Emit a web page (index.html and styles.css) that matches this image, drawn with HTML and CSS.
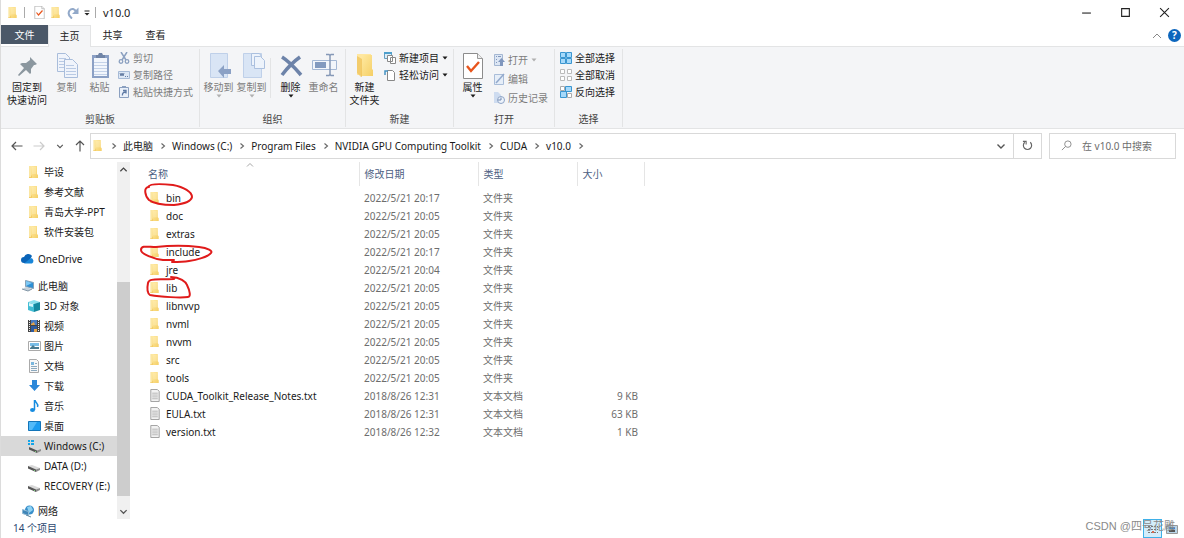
FILE: index.html
```html
<!DOCTYPE html>
<html lang="zh-CN">
<head>
<meta charset="utf-8">
<title>v10.0</title>
<link rel="stylesheet" href="styles.css">
</head>
<body>
<svg class="defs" aria-hidden="true">
  <defs>
    <linearGradient id="gold" x1="0" x2="1" y1="0" y2="1"><stop offset="0" stop-color="#ffeaa3"/><stop offset="1" stop-color="#f5cf66"/></linearGradient>
    <symbol id="folder" viewBox="0 0 12 14"><path fill="#fbe6a2" d="M1 1h4l1 1v11H1z"/><path fill="url(#gold)" d="M3 1h6v8l1 1v3H3z"/><path fill="#f3cb66" d="M1 12h2v-2l1 1v2H1z"/><path fill="#fff0bd" d="M4 2h4v7H4z" opacity=".4"/></symbol>
    <symbol id="txt" viewBox="0 0 12 14"><path fill="#f2f2f2" stroke="#9a9a9a" d="M1.500 .5h7l2 2v11h-9z"/><path stroke="#b4b4b4" d="M3 4.500h6M3 6.500h6M3 8.500h6M3 10.500h6"/></symbol>
    <symbol id="right" viewBox="0 0 8 8"><path d="M2.500 1.500 5.500 4l-3 2.500" fill="none" stroke="#666" stroke-width="1.100"/></symbol>
    <symbol id="down" viewBox="0 0 10 10"><path d="m1.500 3.500 3.500 3.500 3.500-3.500" fill="none" stroke="#555" stroke-width="1.400"/></symbol>
    <symbol id="up" viewBox="0 0 10 10"><path d="M1.500 7 5 3.500 8.500 7" fill="none" stroke="#444" stroke-width="1.400"/></symbol>
    <symbol id="upthin" viewBox="0 0 10 8"><path d="M1 6 5 2l4 4" fill="none" stroke="#888"/></symbol>
    <symbol id="caret" viewBox="0 0 6 4"><path d="M0.500 0.500h5L3 3.500z" fill="currentColor"/></symbol>
    <symbol id="drive" viewBox="0 0 14 14"><path fill="#d9d9d9" d="m1 7 4-1 8 3-4 2z"/><path fill="#555" d="m1 7 8 3.500v2.500L1 9.500z"/><path fill="#8e8e8e" d="m9 10.500 4-1.500v2l-4 2z"/><path stroke="#7ed37e" d="M7.500 11v1"/></symbol>
    <symbol id="check" viewBox="0 0 20 26"><path fill="#fff" stroke="#8c8c8c" d="M.5.5h14l5 5v20H.5z"/><path fill="#eee" stroke="#999" d="M14.500.5v5h5"/><path d="m4 13 4 5 8-9" fill="none" stroke="#e8541c" stroke-width="2.400"/></symbol>
  </defs>
</svg>

<div class="window">
  <header class="titlebar">
    <div class="quick">
      <svg class="i-folder"><use href="#folder"/></svg>
      <span class="sep"></span>
      <button aria-label="属性"><svg class="i-check"><use href="#check"/></svg></button>
      <button aria-label="新建文件夹"><svg class="i-folder"><use href="#folder"/></svg></button>
      <button aria-label="恢复"><svg class="i-redo" viewBox="0 0 12 12"><path d="M5 11.500C1.500 9 1 6 2.500 3.500 4.500 1 8 1.500 9 5" fill="none" stroke="#92a9c9" stroke-width="2"/><path d="M11.500 .5V7H5z" fill="#92a9c9"/></svg></button>
      <button aria-label="自定义快速访问工具栏"><svg class="i-custom" viewBox="0 0 6 6"><path d="M.5 1h5" stroke="#222"/><path d="M.5 3h5L3 5.500z" fill="#222"/></svg></button>
      <span class="sep"></span>
      <span class="title">v10.0</span>
    </div>
    <div class="controls">
      <button aria-label="最小化"><svg viewBox="0 0 10 10"><path d="M1 5.500h8" stroke="#222"/></svg></button>
      <button aria-label="最大化"><svg viewBox="0 0 10 10"><path d="M1.500 1.500h7v7h-7z" fill="none" stroke="#222"/></svg></button>
      <button aria-label="关闭"><svg viewBox="0 0 10 10"><path d="m1 1 8 8M9 1 1 9" stroke="#222"/></svg></button>
    </div>
  </header>

  <nav class="tabs">
    <button class="tab file">文件</button>
    <button class="tab active">主页</button>
    <button class="tab">共享</button>
    <button class="tab">查看</button>
    <div class="tabtools">
      <button aria-label="最小化功能区"><svg class="i-up" viewBox="0 0 10 8"><use href="#upthin"/></svg></button>
      <button class="help" aria-label="帮助">?</button>
    </div>
  </nav>

  <section class="ribbon">
    <div class="group clipboard">
      <div class="tools">
        <button class="big wide"><svg viewBox="0 0 26 26"><path d="m16 4 7 7-2 1-1 0-3 4 0 4-1 1-4-4-7 6-1-1 6-7-4-4 2-1h4l4-3z" fill="#8b979f"/></svg><span>固定到<br>快速访问</span></button>
        <button class="big off"><svg viewBox="0 0 26 26"><g fill="#f0f4fb" stroke="#a9bddb"><path d="M3.500.5h8l4 4v14h-12z"/><path d="M10.500 6.500h8l5 5v13h-13z"/></g><path stroke="#b9cae4" d="M5 5.500h7M5 8.500h5M5 11.500h5M5 14.500h5M12 12.500h8M12 15.500h10M12 18.500h10M12 21.500h10"/></svg><span>复制</span></button>
        <button class="big off"><svg viewBox="0 0 26 26"><path fill="#8ba0c5" d="M5 2h17v23H5z"/><path fill="#f2f6fc" d="M7 5h13v18H7z"/><path stroke="#c4d2e8" d="M7 9.500h13M7 12.500h13M7 15.500h13M7 18.500h13M7 21.500h13"/><path fill="#7185a7" d="M9 2h2l1-2h3l1 2h2v3H9z"/></svg><span>粘贴</span></button>
        <div class="small off">
          <button><svg viewBox="0 0 12 12"><path d="m3 0 5 8M9 0 4 8" stroke="#8ba0c0" stroke-width="1.500"/><g fill="none" stroke="#8ba0c0" stroke-width="1.300"><circle cx="3" cy="9.500" r="1.800"/><circle cx="9" cy="9.500" r="1.800"/></g></svg>剪切</button>
          <button><svg viewBox="0 0 12 12"><path fill="#dce7f5" stroke="#a6bad6" d="M.5 2.500h11v7H.5z"/><path d="m2 4 1 3 1-3 1 3 1-3M7 7.500h1M9 7.500h1" fill="none" stroke="#677fa5"/></svg>复制路径</button>
          <button><svg viewBox="0 0 12 12"><path fill="#eaf0f9" stroke="#8ba0c0" d="M1.500 1.500h9v10h-9z"/><path fill="#8ba0c0" d="M4 0h4v2H4z"/><path d="M4.500 9.500c-.5-2 1-3.500 3-3.500M5 4.500h3v3" fill="none" stroke="#5e79a4" stroke-width="1.300"/></svg>粘贴快捷方式</button>
        </div>
      </div>
      <div class="label">剪贴板</div>
    </div>

    <div class="group organize">
      <div class="tools">
        <button class="big off"><svg viewBox="0 0 26 26"><path fill="#d9e5f5" stroke="#bfd0e9" d="M4.500.5h17v24h-17z"/><path fill="#8ba1c5" d="m12 18 6-6v4h7v5h-7v4z"/></svg><span>移动到</span><svg class="caret"><use href="#caret"/></svg></button>
        <button class="big off"><svg viewBox="0 0 26 26"><path fill="#d9e5f5" stroke="#bfd0e9" d="M4.500.5h18v24h-18z"/><g fill="#edf3fb" stroke="#abc0df"><path d="M12.500.5h8l2 3v9h-10z"/><path d="M15.500 3.500h6l4 4v8h-10z"/></g></svg><span>复制到</span><svg class="caret"><use href="#caret"/></svg></button>
        <span class="rule"></span>
        <button class="big"><svg viewBox="0 0 26 26"><path d="M4 4c8 5 13 11 19 18M22 4C15 9 10 14 4 22" stroke="#6d83a9" stroke-width="3.500" fill="none"/></svg><span>删除</span><svg class="caret"><use href="#caret"/></svg></button>
        <button class="big off"><svg viewBox="0 0 26 26"><path fill="#f2f6fb" stroke="#a4b8d5" d="M1.500 7.500h24v9H1.500z"/><path fill="#829abf" d="M4 9h11v6H4z"/><path d="M15 1.500h3l1 1 1-1h3M19 2v20M15 22.500h3l1-1 1 1h3" fill="none" stroke="#8598b7" stroke-width="1.500"/></svg><span>重命名</span></button>
      </div>
      <div class="label">组织</div>
    </div>

    <div class="group create">
      <div class="tools">
        <button class="big"><svg viewBox="0 0 26 26"><path fill="#ffe7a0" d="M5 1h14v21H5z"/><path fill="url(#gold)" d="M10 2h10v14l1 1v6H9z"/><path fill="#edbd50" d="M5 20V3l5 3v18H9z" opacity=".65"/></svg><span>新建<br>文件夹</span></button>
        <div class="small">
          <button><svg viewBox="0 0 12 12"><path fill="#dceefa" stroke="#659fc2" d="M.5.5h7v6h-7z"/><path fill="#4d9fcc" d="M0 0h8v2H0z"/><path fill="#fff" stroke="#888" d="M3.500 3.500h5v6h-5zM6.500 5.500h5v6h-5z"/></svg>新建项目<svg class="caret"><use href="#caret"/></svg></button>
          <button><svg viewBox="0 0 12 12"><path fill="#fff" stroke="#888" d="M3.500 1.500h5l2 2v8h-7z"/><path d="M1 6V2h3" fill="none" stroke="#4593c3" stroke-width="1.500"/></svg>轻松访问<svg class="caret"><use href="#caret"/></svg></button>
        </div>
      </div>
      <div class="label">新建</div>
    </div>

    <div class="group open">
      <div class="tools">
        <button class="big"><svg viewBox="0 0 20 26"><use href="#check"/></svg><span>属性</span><svg class="caret"><use href="#caret"/></svg></button>
        <div class="small roomy off">
          <button><svg viewBox="0 0 12 12"><path fill="#dce6f4" stroke="#a4b7d2" d="M1.500.5h8v11h-8z"/><path stroke="#8298bd" d="M3 2.500h1M3 5.500h1M3 8.500h1M5 2.500h3"/><path fill="#8097bd" d="m8.500 4 3.500 4h-2v4H7V8H5z"/></svg>打开<svg class="caret"><use href="#caret"/></svg></button>
          <button><svg viewBox="0 0 12 12"><path fill="#e6eef8" stroke="#a9bdd9" d="M1.500 1.500h9v10h-9z"/><path d="m3 10 8-9" stroke="#92a9cc" stroke-width="1.500"/></svg>编辑</button>
          <button><svg viewBox="0 0 12 12"><path fill="#cedcf0" d="M1 0h4l3 3v8H1z"/><circle cx="8" cy="8" r="3.500" fill="#edf3fb" stroke="#8ea4c6"/><path d="M8 5.500V8H5" fill="none" stroke="#7189b1"/></svg>历史记录</button>
        </div>
      </div>
      <div class="label">打开</div>
    </div>

    <div class="group select">
      <div class="tools">
        <div class="small">
          <button><svg viewBox="0 0 12 12"><path fill="#a6d9fa" stroke="#3b96d0" d="M.5.5h5v5h-5zM6.500.5h5v5h-5zM.5 6.500h5v5h-5zM6.500 6.500h5v5h-5z"/></svg>全部选择</button>
          <button><svg viewBox="0 0 12 12"><path fill="#fff" stroke="#bbb" d="M.5.5h4v4h-4zM7.500.5h4v4h-4zM.5 7.500h4v4h-4zM7.500 7.500h4v4h-4z"/></svg>全部取消</button>
          <button><svg viewBox="0 0 12 12"><path fill="#fff" stroke="#aaa" d="M.5.5h4v4h-4zM7.500 7.500h4v4h-4z"/><path fill="#a6d9fa" stroke="#3b96d0" d="M5.500.5h6v5h-6zM.5 5.500h6v6h-6z"/></svg>反向选择</button>
        </div>
      </div>
      <div class="label">选择</div>
    </div>
  </section>

  <section class="locbar">
    <div class="history">
      <button aria-label="后退"><svg viewBox="0 0 12 12"><path d="M11.500 6H1M5 2 1 6l4 4" fill="none" stroke="#555" stroke-width="1.200"/></svg></button>
      <button aria-label="前进"><svg viewBox="0 0 12 12"><path d="M.5 6H11M7 2l4 4-4 4" fill="none" stroke="#ccc" stroke-width="1.200"/></svg></button>
      <button class="recent" aria-label="最近浏览的位置"><svg viewBox="0 0 10 10"><use href="#down"/></svg></button>
      <button class="parent" aria-label="向上"><svg viewBox="0 0 12 12"><path d="M6 11.500V1M2 5l4-4 4 4" fill="none" stroke="#555" stroke-width="1.200"/></svg></button>
    </div>
    <div class="address">
      <div class="crumbs">
        <svg class="i-folder"><use href="#folder"/></svg>
        <svg class="chev"><use href="#right"/></svg><button>此电脑</button>
        <svg class="chev"><use href="#right"/></svg><button>Windows (C:)</button>
        <svg class="chev"><use href="#right"/></svg><button>Program Files</button>
        <svg class="chev"><use href="#right"/></svg><button>NVIDIA GPU Computing Toolkit</button>
        <svg class="chev"><use href="#right"/></svg><button>CUDA</button>
        <svg class="chev"><use href="#right"/></svg><button>v10.0</button>
        <svg class="chev"><use href="#right"/></svg>
      </div>
      <button class="drop" aria-label="以前的位置"><svg viewBox="0 0 10 10"><use href="#down"/></svg></button>
      <button class="refresh" aria-label="刷新"><svg viewBox="0 0 12 12"><path d="M3 2.500a4.500 4.500 0 1 0 6 0" fill="none" stroke="#666" stroke-width="1.300"/><path d="M1 1.500h3.500V5" fill="none" stroke="#666" stroke-width="1.200"/></svg></button>
    </div>
    <label class="search"><svg viewBox="0 0 12 12"><circle cx="7.500" cy="4.500" r="3.500" fill="none" stroke="#888"/><path d="M5 7 1 11" stroke="#888"/></svg><input type="text" placeholder="在 v10.0 中搜索" aria-label="搜索"></label>
  </section>

  <main class="content">
    <aside class="sidebar">
      <ul class="tree">
        <li class="sub"><svg class="i-folder"><use href="#folder"/></svg>毕设</li>
        <li class="sub"><svg class="i-folder"><use href="#folder"/></svg>参考文献</li>
        <li class="sub"><svg class="i-folder"><use href="#folder"/></svg>青岛大学-PPT</li>
        <li class="sub"><svg class="i-folder"><use href="#folder"/></svg>软件安装包</li>
        <li class="root"><svg viewBox="0 0 14 14"><path fill="#0a64b8" d="M3 11a3 3 0 0 1 0-6 4.500 4.500 0 0 1 8-1l-4 7z"/><path fill="#1986d8" d="M3 11.500 10 6a3 3 0 0 1 1 5.500z"/></svg>OneDrive</li>
        <li class="root"><svg viewBox="0 0 14 14"><path fill="#2e8fd4" stroke="#87a1b6" d="m4.500 1.500 8 2v6l-8-2z"/><path fill="#7dc8f4" d="m5 2 6 2-6 3z"/><path fill="#c3d0da" d="m1 10 4-2 6 2-4 2z"/><path stroke="#8296a6" d="m1 10 6 2 4-2" fill="none"/></svg>此电脑</li>
        <li class="sub"><svg viewBox="0 0 14 14"><path fill="#8be0ed" d="m1 3 6-2 6 2-5 2z"/><path fill="#43bdd4" d="m1 3 6 2v8l-6-2z"/><path fill="#14899f" d="m7 5 6-2v8l-6 2z"/><path fill="#d5f5fa" d="m2 4 4 1v3L2 7z"/></svg>3D 对象</li>
        <li class="sub"><svg viewBox="0 0 14 14"><path fill="#444" d="M1 1h12v12H1z"/><path fill="#477bc3" d="M4 1h6v5H4z"/><path fill="#2e5ba0" d="M4 7h6v6H4z"/><path fill="#e4a34a" d="m4 5 3-2 1 3H4zM7 10h3v3H7z"/><path stroke="#eee" stroke-dasharray="1 1" d="M2.500 1v12M11.500 1v12"/></svg>视频</li>
        <li class="sub"><svg viewBox="0 0 14 14"><path fill="#fff" stroke="#aaa" d="M1.500 2.500h12v9H1.500z"/><path fill="#79bde7" d="M3 4h9v3H3z"/><path fill="#487b91" d="m3 9 3-3 2 2 4 0v2H3z"/></svg>图片</li>
        <li class="sub"><svg viewBox="0 0 14 14"><path fill="#f7f7f7" stroke="#aaa" d="M2.500.5h7l2 2v11h-9z"/><path fill="#79b6dd" d="M4 3h3v3H4z"/><path stroke="#8ba9bf" d="M8 4.500h2M4 7.500h6M4 9.500h6M4 11.500h6"/></svg>文档</li>
        <li class="sub"><svg viewBox="0 0 14 14"><path fill="#2c88d9" d="M5 1h5v5h3l-5.500 6L2 6h3z"/></svg>下载</li>
        <li class="sub"><svg viewBox="0 0 14 14"><path d="M7.500 1v10M8 1c0 3 4 3 2.500 7" fill="none" stroke="#168ce0" stroke-width="1.500"/><ellipse cx="5.500" cy="11" rx="2.500" ry="2" fill="#168ce0"/></svg>音乐</li>
        <li class="sub"><svg viewBox="0 0 14 14"><path fill="#1c9cf0" stroke="#1375b9" d="M1.500 2.500h12v9H1.500z"/><path fill="#53baf8" d="M2 3h8l-5 8H2z"/></svg>桌面</li>
        <li class="sub chosen"><svg viewBox="0 0 14 14"><use href="#drive" x="1" y="1" width="14" height="14"/><path fill="#15a5e8" d="M1 1h2v2H1zM4 1h3v2H4zM1 4h2v2H1zM4 4h3v2H4z"/></svg>Windows (C:)</li>
        <li class="sub"><svg viewBox="0 0 14 14"><use href="#drive"/></svg>DATA (D:)</li>
        <li class="sub"><svg viewBox="0 0 14 14"><use href="#drive"/></svg>RECOVERY (E:)</li>
        <li class="root"><svg viewBox="0 0 14 14"><circle cx="8.500" cy="6" r="4.500" fill="#398fca"/><path fill="#8dd1f3" d="m6 3 4-1 2 4-4 3z"/><path fill="#3f86b8" stroke="#8fb9d4" d="m1.500 5.500 6 2v4l-6-2z"/><path stroke="#61889f" d="m5 11 5 2"/></svg>网络</li>
      </ul>
      <div class="scrollbar">
        <svg viewBox="0 0 10 10"><use href="#up"/></svg>
        <div class="track"><div class="thumb"></div></div>
        <svg viewBox="0 0 10 10"><use href="#down"/></svg>
      </div>
    </aside>

    <section class="files">
      <table>
        <colgroup><col class="c-name"><col class="c-date"><col class="c-type"><col class="c-size"><col></colgroup>
        <thead><tr><th>名称<svg class="sort"><use href="#upthin"/></svg></th><th>修改日期</th><th>类型</th><th>大小</th><th></th></tr></thead>
        <tbody>
          <tr><td><svg class="f"><use href="#folder"/></svg>bin</td><td>2022/5/21 20:17</td><td>文件夹</td><td></td><td></td></tr>
          <tr><td><svg class="f"><use href="#folder"/></svg>doc</td><td>2022/5/21 20:05</td><td>文件夹</td><td></td><td></td></tr>
          <tr><td><svg class="f"><use href="#folder"/></svg>extras</td><td>2022/5/21 20:05</td><td>文件夹</td><td></td><td></td></tr>
          <tr><td><svg class="f"><use href="#folder"/></svg>include</td><td>2022/5/21 20:17</td><td>文件夹</td><td></td><td></td></tr>
          <tr><td><svg class="f"><use href="#folder"/></svg>jre</td><td>2022/5/21 20:04</td><td>文件夹</td><td></td><td></td></tr>
          <tr><td><svg class="f"><use href="#folder"/></svg>lib</td><td>2022/5/21 20:05</td><td>文件夹</td><td></td><td></td></tr>
          <tr><td><svg class="f"><use href="#folder"/></svg>libnvvp</td><td>2022/5/21 20:05</td><td>文件夹</td><td></td><td></td></tr>
          <tr><td><svg class="f"><use href="#folder"/></svg>nvml</td><td>2022/5/21 20:05</td><td>文件夹</td><td></td><td></td></tr>
          <tr><td><svg class="f"><use href="#folder"/></svg>nvvm</td><td>2022/5/21 20:05</td><td>文件夹</td><td></td><td></td></tr>
          <tr><td><svg class="f"><use href="#folder"/></svg>src</td><td>2022/5/21 20:05</td><td>文件夹</td><td></td><td></td></tr>
          <tr><td><svg class="f"><use href="#folder"/></svg>tools</td><td>2022/5/21 20:05</td><td>文件夹</td><td></td><td></td></tr>
          <tr><td><svg class="f"><use href="#txt"/></svg>CUDA_Toolkit_Release_Notes.txt</td><td>2018/8/26 12:31</td><td>文本文档</td><td>9 KB</td><td></td></tr>
          <tr><td><svg class="f"><use href="#txt"/></svg>EULA.txt</td><td>2018/8/26 12:31</td><td>文本文档</td><td>63 KB</td><td></td></tr>
          <tr><td><svg class="f"><use href="#txt"/></svg>version.txt</td><td>2018/8/26 12:32</td><td>文本文档</td><td>1 KB</td><td></td></tr>
        </tbody>
      </table>
      <svg class="marks" viewBox="0 0 90 140" fill="none" stroke="#e01b1b" stroke-width="2" stroke-linecap="round" stroke-linejoin="round">
        <path d="M12 25C14 21 28 22 37 23C48 25 56 30 56 35C55 40 47 42 38 43C26 43 18 42 13 38C9 34 7 25 13 25"/>
        <path d="M38 98L27 98C18 97 5 92 5 88C5 83 12 85 20 85C40 83 54 84 63 85C72 86 77 89 75 91C72 95 60 98 53 99C47 100 42 100 36 100"/>
        <path d="M35 115C44 115 50 120 51 123C54 129 55 135 52 135C45 136 25 135 14 133C11 131 11 126 12 121C13 116 20 118 38 117"/>
      </svg>
    </section>
  </main>

  <footer class="status">
    <span>14 个项目</span>
    <div class="views">
      <button class="on" aria-label="详细信息"><svg viewBox="0 0 12 12"><path stroke="#777" stroke-dasharray="2 1" d="M1 3.500h10M1 6.500h10M1 9.500h10"/><path fill="#d76b4d" d="M5 8h2v2H5z"/></svg></button>
      <button aria-label="大图标"><svg viewBox="0 0 12 12"><path fill="#b9d5e8" stroke="#999" d="M.5 2.500h11v8H.5z"/><path fill="#3b87cc" d="M3 4h6v2H3z"/><path fill="#555" d="M3 7h6v2H3z"/></svg></button>
      <span class="watermark">CSDN @四号花雕</span>
    </div>
  </footer>
</div>
</body>
</html>
```
FILE: styles.css
```css
* { box-sizing: border-box; }
body {
  margin: 0;
  background: #fff;
  color: #1a1a1a;
  font: 10px/14px "Noto Sans", "Noto Sans CJK SC", sans-serif;
}
button {
  margin: 0;
  padding: 0;
  border: 0;
  background: none;
  color: inherit;
  font: inherit;
  white-space: nowrap;
}
svg { display: block; flex: none; }
.defs { position: absolute; width: 0; height: 0; }
.window {
  display: flex;
  flex-direction: column;
  min-height: 100vh;
  border-left: 1px solid #dcdcdc;
}
.i-folder { width: 12px; height: 13px; }
.caret { width: 6px; height: 4px; }

.titlebar { display: flex; justify-content: space-between; height: 25px; }
.quick { display: flex; align-items: center; padding-left: 6px; gap: 5px; }
.quick .sep { width: 1px; height: 11px; background: #aaa; margin-right: 4px; }
.i-check { width: 11px; height: 13px; }
.i-redo { width: 12px; height: 12px; }
.i-custom { width: 6px; height: 6px; }
.quick .title { margin-left: -2px; font-size: 11px; }
.controls { display: flex; }
.controls button { width: 39px; display: grid; place-items: center; }
.controls svg { width: 11px; height: 11px; }

.tabs { display: flex; height: 22px; border-bottom: 1px solid #e3e4e5; }
.tab { width: 43px; height: 20px; }
.tab.file { width: 47px; height: 19px; background: #4b5868; color: #fff; }
.tab.active {
  height: 22px;
  padding-bottom: 2px;
  background: #f4f5f7;
  border: 1px solid #e3e4e5;
  border-bottom: 0;
}
.tabtools { display: flex; align-items: center; gap: 6px; margin-left: auto; padding-right: 3px; }
.i-up { width: 10px; height: 8px; }
.help {
  width: 13px;
  height: 13px;
  border-radius: 50%;
  background: #0c66bd;
  color: #fff;
  line-height: 13px;
  font-weight: 700;
}

.ribbon { display: flex; height: 82px; background: #f4f5f7; border-bottom: 1px solid #e3e4e5; }
.group {
  display: flex;
  flex-direction: column;
  justify-content: space-between;
  margin: 2px 0 1px;
  border-right: 1px solid #e3e4e5;
}
.tools { display: flex; }
.label { text-align: center; color: #444; line-height: 16px; }
.big { display: flex; flex-direction: column; align-items: center; width: 33px; padding-top: 4px; line-height: 13px; }
.big.wide { width: 46px; }
.big > svg:first-child { width: 26px; height: 26px; margin-bottom: 2px; }
.off { color: #7d7d7d; }
.off .caret { color: #b0b0b0; }
.small { display: flex; flex-direction: column; align-items: flex-start; }
.small button { display: flex; align-items: center; gap: 3px; height: 17px; }
.small svg:first-child { width: 12px; height: 12px; }
.small.roomy { padding-top: 1px; }
.small.roomy button { height: 19px; }
.rule { width: 1px; height: 40px; margin: 9px 3px 0 2px; background: #e3e4e5; }
.clipboard { width: 199px; }
.clipboard .tools { padding-left: 3px; }
.clipboard .small { padding-left: 2px; }
.organize { width: 146px; }
.organize .tools { padding-left: 2px; }
.create { width: 108px; }
.create .tools { padding-left: 2px; gap: 3px; }
.open { width: 101px; }
.open .tools { padding-left: 2px; gap: 4px; }
.select { width: 68px; }
.select .tools { padding-left: 5px; }

.locbar { display: flex; align-items: center; height: 33px; padding-right: 8px; }
.history { display: flex; align-items: center; justify-content: space-between; width: 89px; padding: 0 4px 0 10px; }
.history svg { width: 12px; height: 12px; }
.history .recent svg { width: 8px; height: 8px; }
.address { display: flex; flex: 1; height: 26px; border: 1px solid #d9d9d9; }
.crumbs { display: flex; flex: 1; align-items: center; padding-left: 1px; }
.crumbs .chev { width: 8px; height: 8px; margin: 0 5px 0 6px; }
.drop { display: grid; place-items: center; width: 24px; }
.refresh { display: grid; place-items: center; width: 28px; border-left: 1px solid #d9d9d9; }
.drop svg { width: 10px; height: 10px; }
.refresh svg { width: 11px; height: 11px; }
.search { display: flex; align-items: center; width: 127px; height: 26px; margin-left: 7px; padding-left: 11px; border: 1px solid #d9d9d9; }
.search svg { width: 11px; height: 11px; }
.search input { flex: 1; min-width: 0; border: 0; outline: 0; padding: 0 0 0 10px; font: inherit; background: none; }
.search input::placeholder { color: #6d6d6d; opacity: 1; }

.content { display: flex; flex: 1; }
.sidebar { display: flex; width: 129px; }
.tree { flex: 1; margin: 0; padding: 0; list-style: none; }
.tree li { display: flex; align-items: center; gap: 3px; height: 20px; padding-left: 20px; white-space: nowrap; }
.tree li svg { width: 14px; height: 14px; }
.tree .sub { padding-left: 26px; }
.tree .root { margin-top: 7px; }
.tree .root:last-child { height: 16px; }
.tree .chosen { background: #d9d9d9; }
.scrollbar { display: flex; flex-direction: column; width: 13px; background: #f0f0f0; }
.scrollbar > svg { width: 9px; height: 9px; margin: 3px 2px; }
.track { flex: 1; display: flex; flex-direction: column; justify-content: flex-end; padding-bottom: 8px; }
.thumb { height: 67%; background: #cdcdcd; }

.files { position: relative; flex: 1; padding-left: 9px; }
table { width: 100%; border-collapse: collapse; table-layout: fixed; }
.c-name { width: 220px; }
.c-date { width: 119px; }
.c-type { width: 99px; }
.c-size { width: 67px; }
th { position: relative; height: 24px; padding: 0 0 1px 5px; text-align: left; font-weight: 400; color: #4c6082; border-right: 1px solid #e5e5e5; }
th:first-child { padding-left: 9px; }
th:last-child { border-right: 0; }
.sort { position: absolute; left: 107px; top: 0; width: 8px; height: 6px; }
tbody::before { content: ""; display: table-row; height: 3px; }
td { height: 18px; padding: 0 6px 0 5px; color: #6d6d6d; white-space: nowrap; }
td:first-child { color: #1a1a1a; padding-left: 10px; }
td:nth-child(4) { text-align: right; }
.f { display: inline-block; width: 12px; height: 13px; margin-right: 5px; vertical-align: -2px; }
.marks { position: absolute; left: 6px; top: 0; width: 90px; height: 140px; }

.status { display: flex; align-items: flex-start; justify-content: space-between; height: 19px; padding: 0 5px 0 12px; color: #2b4770; line-height: 18px; }
.views { position: relative; display: flex; align-items: center; gap: 3px; }
.views button { display: grid; place-items: center; width: 14px; height: 19px; }
.views svg { width: 12px; height: 12px; }
.views .on { width: 19px; background: #d3edfb; border: 1px solid #3fb0e8; }
.watermark {
  position: absolute;
  right: 4px;
  top: 0;
  color: #8a8a8a;
  font: 11px/14px "Liberation Sans", "Noto Sans CJK SC", sans-serif;
  white-space: nowrap;
}
```
